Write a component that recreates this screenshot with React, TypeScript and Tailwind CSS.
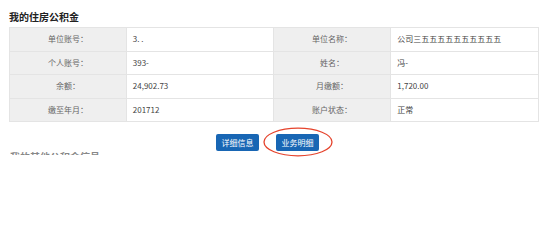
import React from "react";

const rows: [string, string, string, string][] = [
  ["单位账号：", "3. .", "单位名称：", "公司三五五五五五五五五五五"],
  ["个人账号：", "393-", "姓名：", "冯-"],
  ["余额：", "24,902.73", "月缴额：", "1,720.00"],
  ["缴至年月：", "201712", "账户状态：", "正常"],
];

export default function App() {
  return (
    <div
      className="w-[553px] h-[235px] bg-white overflow-hidden"
      style={{ fontFamily: '"Noto Sans CJK SC", "Noto Sans", sans-serif' }}
    >
      <div className="pl-[9px] pt-[10px] text-[10px] leading-[14px] font-bold text-[#222]">
        我的住房公积金
      </div>
      <div className="ml-[9px] mt-[3px] w-[530px] border-t border-l border-[#e4e4e4]">
        {rows.map((r, i) => (
          <div key={i} className="flex h-[23.5px] border-b border-[#e4e4e4] text-[8px]">
            <div className="w-[117px] bg-[#efefef] border-r border-[#e4e4e4] flex items-center justify-center text-[#666]">
              {r[0]}
            </div>
            <div className="w-[147px] border-r border-[#e4e4e4] flex items-center pl-[6px] text-[#444]">
              {r[1]}
            </div>
            <div className="w-[118px] bg-[#efefef] border-r border-[#e4e4e4] flex items-center justify-center text-[#666]">
              {r[2]}
            </div>
            <div className="w-[148px] border-r border-[#e4e4e4] flex items-center pl-[6px] text-[#444]">
              {r[3]}
            </div>
          </div>
        ))}
      </div>
      <div className="flex items-start h-[17px] pl-[216px] mt-[12px] gap-[17px]">
        <button className="block w-[43px] h-[17px] rounded-[2px] bg-[#1866b4] text-white text-[8px] leading-[17px] text-center">
          详细信息
        </button>
        <div className="relative flex h-[17px]">
          <button className="block w-[43px] h-[17px] rounded-[2px] bg-[#1866b4] text-white text-[8px] leading-[17px] text-center">
            业务明细
          </button>
          <svg
            className="absolute left-[-13px] top-[-7px] pointer-events-none"
            width="70"
            height="30"
            viewBox="0 0 70 30"
          >
            <ellipse cx="35" cy="15" rx="34" ry="13.8" fill="none" stroke="#e5432c" strokeWidth="1.3" />
          </svg>
        </div>
      </div>
      <div className="ml-[10px] mt-[1px] h-[3px] overflow-hidden">
        <div className="text-[10px] leading-[10px] font-bold text-[#888]">我的其他公积金信息</div>
      </div>
    </div>
  );
}
